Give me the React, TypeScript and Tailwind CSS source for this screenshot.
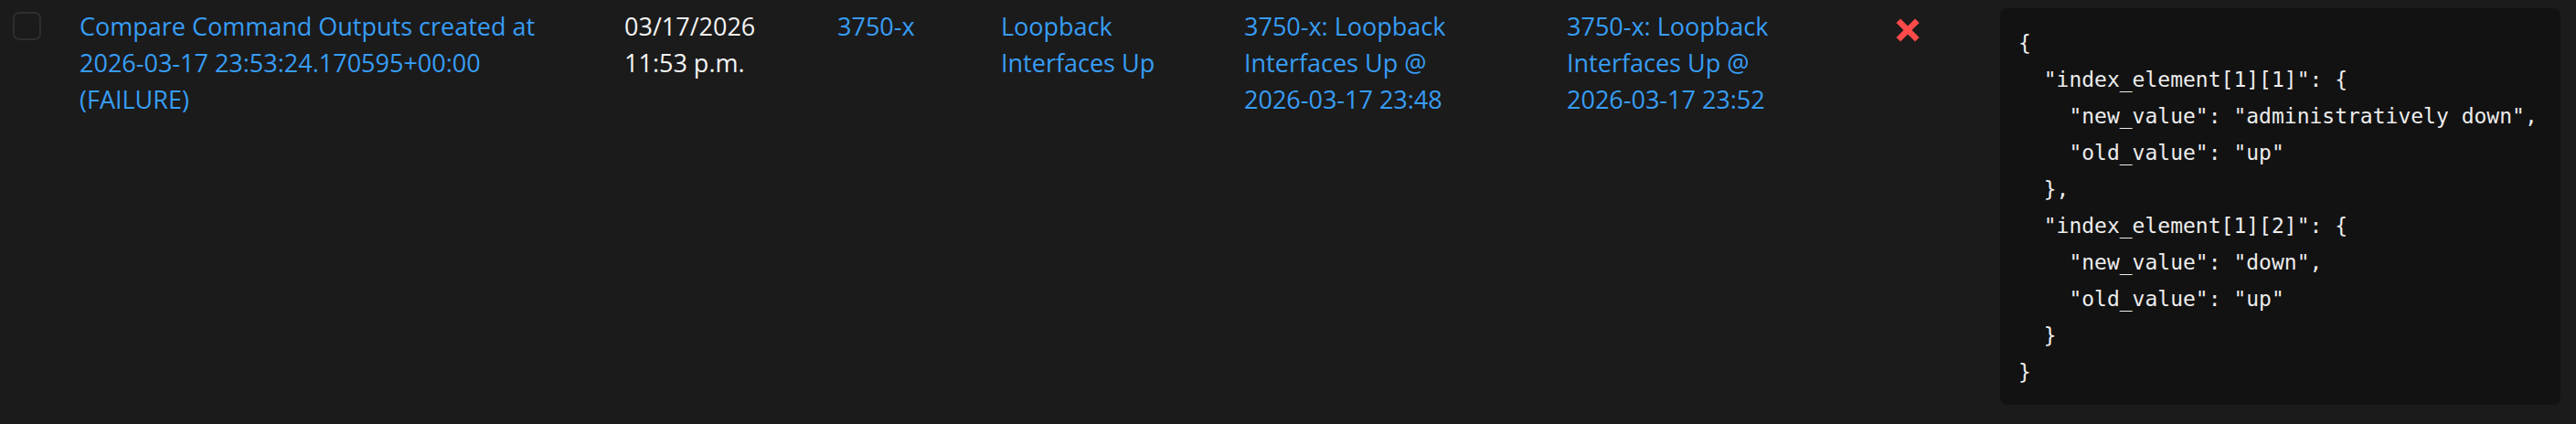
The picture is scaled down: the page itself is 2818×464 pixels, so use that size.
import React from 'react';

const diff = `{
  "index_element[1][1]": {
    "new_value": "administratively down",
    "old_value": "up"
  },
  "index_element[1][2]": {
    "new_value": "down",
    "old_value": "up"
  }
}`;

const FailIcon: React.FC = () => (
  <svg width="26" height="26" viewBox="0 0 26 26" aria-label="failed">
    <line x1="5" y1="5" x2="21" y2="21" stroke="#ff4a4a" strokeWidth="6.5" strokeLinecap="square" />
    <line x1="21" y1="5" x2="5" y2="21" stroke="#ff4a4a" strokeWidth="6.5" strokeLinecap="square" />
  </svg>
);

const LinkCell: React.FC<{ width: string; children: React.ReactNode }> = ({ width, children }) => (
  <div className={`${width} shrink-0 px-[28px] text-[#379df5]`}>
    <a href="#" className="hover:underline">{children}</a>
  </div>
);

// keeps "2026-03-17 23:48" from breaking at the hyphens
const Stamp: React.FC<{ children: React.ReactNode }> = ({ children }) => (
  <span className="whitespace-nowrap">{children}</span>
);

export default function App() {
  return (
    <div className="min-h-screen w-full bg-[#1b1b1b] font-['Open_Sans','Noto_Sans',sans-serif]">
      <div className="flex items-start pt-[9px] text-[27px] leading-[40px]">
        {/* select */}
        <div className="w-[59px] shrink-0 pl-[14px] pt-[4px]">
          <div className="w-[31px] h-[31px] rounded-[7px] border-2 border-[#2e2e2e] bg-[#1b1b1b]" />
        </div>

        <LinkCell width="w-[596px]">
          Compare Command Outputs created at <Stamp>2026-03-17 23:53:24.170595+00:00</Stamp> (FAILURE)
        </LinkCell>

        <div className="w-[233px] shrink-0 px-[28px] text-[#f4f4f4]">
          <div>03/17/2026</div>
          <div>11:53 p.m.</div>
        </div>

        <LinkCell width="w-[179px]">3750-x</LinkCell>
        <LinkCell width="w-[266px]">Loopback Interfaces Up</LinkCell>
        <LinkCell width="w-[353px]">
          3750-x: Loopback Interfaces Up @ <Stamp>2026-03-17 23:48</Stamp>
        </LinkCell>
        <LinkCell width="w-[353px]">
          3750-x: Loopback Interfaces Up @ <Stamp>2026-03-17 23:52</Stamp>
        </LinkCell>

        <div className="w-[121px] shrink-0 pl-[35px] pt-[11px]">
          <FailIcon />
        </div>

        <div className="shrink-0 pl-[28px]">
          <pre className="w-[613px] rounded-[8px] bg-[#121212] pl-[20px] pt-[18px] pb-[16px] font-['DejaVu_Sans_Mono',monospace] text-[23px] leading-[40px] text-[#ececec]">
            {diff}
          </pre>
        </div>
      </div>
    </div>
  );
}
